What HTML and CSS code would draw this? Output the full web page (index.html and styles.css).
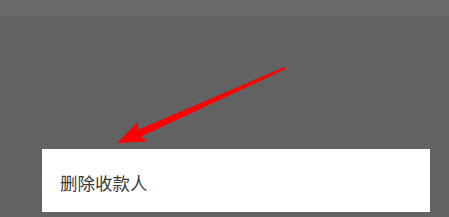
FILE: index.html
```html
<!DOCTYPE html>
<html lang="zh">
<head>
	<meta charset="UTF-8">
	<title>删除收款人</title>
	<link rel="stylesheet" href="styles.css">
</head>
<body>
	<div class="topbar"></div>
	<div class="screen">
		<div class="sheet">
			<div class="sheet-item">删除收款人</div>
		</div>
	</div>

	<svg class="arrow" width="449" height="217" viewBox="0 0 449 217">
		<polygon fill="#ff0000" points="117,143 147.1,141.6 141,136.6 285.5,69.1 284.5,66.9 138,129.8 138.1,121.6"/>
	</svg>
</body>
</html>
```

FILE: styles.css
```css
html, body {
	margin: 0;
	height: 100%;
}
body {
	background: #626262;
	font-family: "Noto Sans CJK SC", "Noto Sans", sans-serif;
	overflow: hidden;
}
.topbar {
	height: 16px;
	background: #6a6a6a;
}
.screen {
	padding-top: 133px;
	padding-left: 42px;
}
.sheet {
	width: 388px;
	height: 63px;
	background: #fff;
	display: flex;
	align-items: center;
}
.sheet-item {
	padding-left: 18px;
	padding-top: 4px;
	font-size: 17.5px;
	color: #3a3a3a;
}
.arrow {
	position: absolute;
	left: 0;
	top: 0;
}
```
